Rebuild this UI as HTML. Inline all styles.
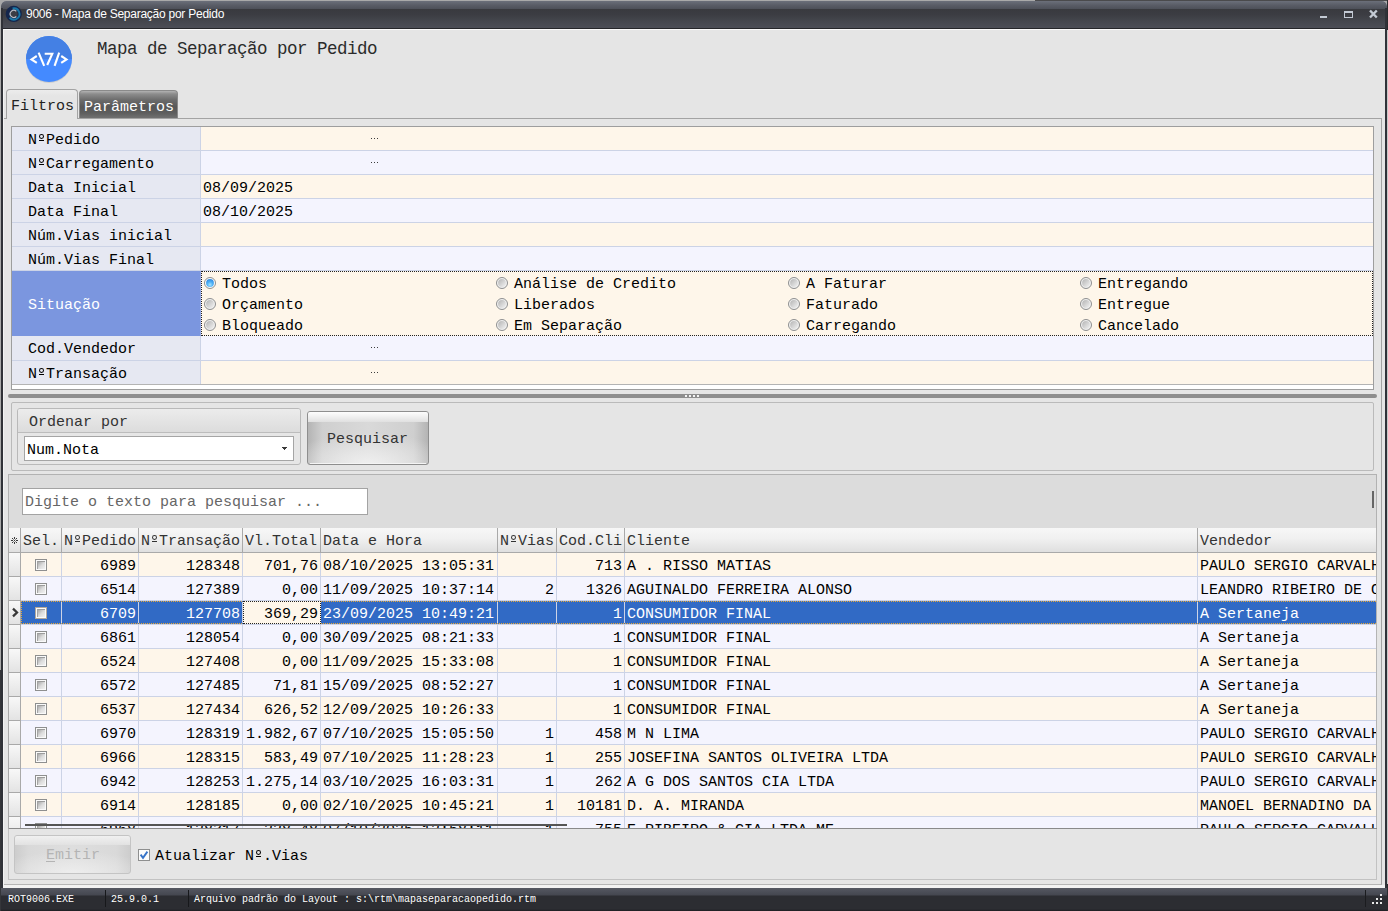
<!DOCTYPE html><html><head><meta charset="utf-8"><title>9006 - Mapa de Separação por Pedido</title><style>
*{box-sizing:border-box;margin:0;padding:0}
html,body{width:1388px;height:911px;overflow:hidden;background:#e5e5e5}
body{font-family:"Liberation Mono",monospace;font-size:15px;color:#000;position:relative}
#root{position:absolute;left:0;top:0;width:1388px;height:911px;overflow:hidden;background:#e5e5e5}
.a{position:absolute}
.t{position:absolute;white-space:pre;line-height:24px;height:24px}
.s{font-family:"Liberation Sans",sans-serif}
.o{display:inline-block;width:9px;height:0;position:relative}
.o i{position:absolute;left:1.8px;bottom:5px;width:5.4px;height:5.2px;border:1.4px solid currentColor;border-radius:50%}
.o b{position:absolute;left:2px;bottom:3px;width:5px;height:1px;background:currentColor}
</style></head><body><div id="root">
<div class="a" style="left:0px;top:0px;width:1388px;height:911px;background:#a9a9a9"></div>
<div class="a" style="left:1035px;top:0px;width:353px;height:1px;background:#4a4a4c"></div>
<div class="a" style="left:1px;top:1px;width:1386px;height:910px;background:#e5e5e5;border-radius:5px 5px 0 0"></div>
<div class="a" style="left:1px;top:1px;width:1386px;height:28px;border-radius:5px 5px 0 0;background:linear-gradient(#6b6f7a 0px,#5a5d67 4px,#4d5059 8px,#393a3f 8.5px,#3c3d43 14px,#44464d 20px,#4c4e57 27px)"></div>
<div class="a" style="left:1px;top:28px;width:1386px;height:1px;background:#25262a"></div>
<div class="a" style="left:3px;top:29px;width:1382px;height:1px;background:#fafafa"></div>
<div class="a" style="left:1px;top:8px;width:2px;height:903px;background:#303238"></div>
<div class="a" style="left:3px;top:30px;width:1px;height:858px;background:#f2f2f2"></div>
<div class="a" style="left:1385px;top:8px;width:2px;height:903px;background:#303238"></div>
<div class="a" style="left:1387px;top:0px;width:1px;height:911px;background:#c8c8c8"></div>
<div class="a" style="left:1387px;top:0px;width:1px;height:30px;background:#2a2b2e"></div>
<div class="a" style="left:1387px;top:884px;width:1px;height:27px;background:#2a2b2e"></div>
<div class="a" style="left:0px;top:670px;width:1px;height:241px;background:#35363a"></div>
<svg class="a" style="left:5px;top:5px" width="18" height="18" viewBox="0 0 18 18"><circle cx="8.8" cy="8.9" r="8.1" fill="#14264c"/><path d="M7.6 3.5A5.6 5.6 0 1 1 4.6 12.6" fill="none" stroke="#1a78a8" stroke-width="1.9"/><circle cx="8.8" cy="8.9" r="3.9" fill="#3b3d45"/><path d="M11.3 6.3A3.6 3.6 0 1 0 11.3 11.5" fill="none" stroke="#b9bdc6" stroke-width="1.2"/></svg>
<div class="t s" style="left:26px;top:3px;color:#fff;font-size:12px;line-height:22px;height:22px;letter-spacing:-0.25px">9006 - Mapa de Separação por Pedido</div>
<div class="a" style="left:1320px;top:16px;width:7px;height:2px;background:#c3cad4"></div>
<div class="a" style="left:1344px;top:11px;width:9px;height:7px;border:1px solid #c3cad4;border-top:2px solid #c3cad4"></div>
<svg class="a" style="left:1368px;top:9px" width="11" height="10" viewBox="1368 9 11 10"><path d="M1370 10.5L1376.8 17.5M1376.8 10.5L1370 17.5" stroke="#c3cad4" stroke-width="2.4"/></svg>
<svg class="a" style="left:22px;top:32px" width="54" height="54" viewBox="22 32 54 54"><defs><clipPath id="ct"><rect x="22" y="32" width="54" height="27"/></clipPath></defs><circle cx="49" cy="60" r="23" fill="#000" opacity="0.10"/><circle cx="49" cy="59" r="23" fill="#448aff"/><circle cx="49" cy="59" r="23" fill="#4480e4" clip-path="url(#ct)"/><g fill="none" stroke="#fff" stroke-width="2.1"><path d="M36.8 56L31.5 59.4L36.8 62.9"/><path d="M38.6 52.7L44.2 65.9"/><path d="M44.7 53.7L52.3 53.7L47.2 65"/><path d="M59.2 52.7L54.6 65.9"/><path d="M61.2 56L66.5 59.4L61.2 62.9"/></g></svg>
<div class="t" style="left:97px;top:37px;font-size:17.5px;letter-spacing:-0.5px;color:#2b2b2b">Mapa de Separação por Pedido</div>
<div class="a" style="left:4px;top:118px;width:1378px;height:767px;border:1px solid #a3a3a3;border-left:none;border-bottom-color:#b5b5b5"></div>
<div class="a" style="left:79px;top:90px;width:99px;height:28px;border:1px solid #8a8a8a;border-bottom:none;border-radius:4px 4px 0 0;background:linear-gradient(#b2b2b2 0,#8c8c8c 3px,#6b6b6b 9px,#575757 16px,#5e5e5e 22px,#757575 28px)"></div>
<div class="t" style="left:84px;top:96px;color:#fff">Parâmetros</div>
<div class="a" style="left:6px;top:89px;width:72px;height:30px;border:1px solid #a3a3a3;border-bottom:none;border-radius:4px 4px 0 0;background:linear-gradient(#ececec,#e5e5e5 6px)"></div>
<div class="t" style="left:11px;top:95px;color:#222">Filtros</div>
<div class="a" style="left:11px;top:126px;width:1363px;height:264px;border:1px solid #9e9e9e;background:#fff"></div>
<div class="a" style="left:12px;top:127px;width:188px;height:23px;background:#e6e8f2"></div>
<div class="a" style="left:12px;top:150px;width:188px;height:1px;background:#ccd3e6"></div>
<div class="a" style="left:200px;top:127px;width:1px;height:24px;background:#ccd3e6"></div>
<div class="a" style="left:201px;top:127px;width:1172px;height:23px;background:#fef6ea"></div>
<div class="a" style="left:201px;top:150px;width:1172px;height:1px;background:#ccd3e6"></div>
<div class="t" style="left:28px;top:129px;">N<span class="o"><i></i><b></b></span>Pedido</div>
<div class="a" style="left:371px;top:138px;width:1px;height:1px;background:#3c3c3c"></div>
<div class="a" style="left:374px;top:138px;width:1px;height:1px;background:#3c3c3c"></div>
<div class="a" style="left:377px;top:138px;width:1px;height:1px;background:#3c3c3c"></div>
<div class="a" style="left:12px;top:151px;width:188px;height:23px;background:#e6e8f2"></div>
<div class="a" style="left:12px;top:174px;width:188px;height:1px;background:#ccd3e6"></div>
<div class="a" style="left:200px;top:151px;width:1px;height:24px;background:#ccd3e6"></div>
<div class="a" style="left:201px;top:151px;width:1172px;height:23px;background:#f4f4fe"></div>
<div class="a" style="left:201px;top:174px;width:1172px;height:1px;background:#ccd3e6"></div>
<div class="t" style="left:28px;top:153px;">N<span class="o"><i></i><b></b></span>Carregamento</div>
<div class="a" style="left:371px;top:162px;width:1px;height:1px;background:#3c3c3c"></div>
<div class="a" style="left:374px;top:162px;width:1px;height:1px;background:#3c3c3c"></div>
<div class="a" style="left:377px;top:162px;width:1px;height:1px;background:#3c3c3c"></div>
<div class="a" style="left:12px;top:175px;width:188px;height:23px;background:#e6e8f2"></div>
<div class="a" style="left:12px;top:198px;width:188px;height:1px;background:#ccd3e6"></div>
<div class="a" style="left:200px;top:175px;width:1px;height:24px;background:#ccd3e6"></div>
<div class="a" style="left:201px;top:175px;width:1172px;height:23px;background:#fef6ea"></div>
<div class="a" style="left:201px;top:198px;width:1172px;height:1px;background:#ccd3e6"></div>
<div class="t" style="left:28px;top:177px;">Data Inicial</div>
<div class="t" style="left:203px;top:177px;">08/09/2025</div>
<div class="a" style="left:12px;top:199px;width:188px;height:23px;background:#e6e8f2"></div>
<div class="a" style="left:12px;top:222px;width:188px;height:1px;background:#ccd3e6"></div>
<div class="a" style="left:200px;top:199px;width:1px;height:24px;background:#ccd3e6"></div>
<div class="a" style="left:201px;top:199px;width:1172px;height:23px;background:#f4f4fe"></div>
<div class="a" style="left:201px;top:222px;width:1172px;height:1px;background:#ccd3e6"></div>
<div class="t" style="left:28px;top:201px;">Data Final</div>
<div class="t" style="left:203px;top:201px;">08/10/2025</div>
<div class="a" style="left:12px;top:223px;width:188px;height:23px;background:#e6e8f2"></div>
<div class="a" style="left:12px;top:246px;width:188px;height:1px;background:#ccd3e6"></div>
<div class="a" style="left:200px;top:223px;width:1px;height:24px;background:#ccd3e6"></div>
<div class="a" style="left:201px;top:223px;width:1172px;height:23px;background:#fef6ea"></div>
<div class="a" style="left:201px;top:246px;width:1172px;height:1px;background:#ccd3e6"></div>
<div class="t" style="left:28px;top:225px;">Núm.Vias inicial</div>
<div class="a" style="left:12px;top:247px;width:188px;height:23px;background:#e6e8f2"></div>
<div class="a" style="left:12px;top:270px;width:188px;height:1px;background:#ccd3e6"></div>
<div class="a" style="left:200px;top:247px;width:1px;height:24px;background:#ccd3e6"></div>
<div class="a" style="left:201px;top:247px;width:1172px;height:23px;background:#f4f4fe"></div>
<div class="a" style="left:201px;top:270px;width:1172px;height:1px;background:#ccd3e6"></div>
<div class="t" style="left:28px;top:249px;">Núm.Vias Final</div>
<div class="a" style="left:12px;top:271px;width:188px;height:65px;background:#7b96df"></div>
<div class="a" style="left:200px;top:271px;width:1px;height:65px;background:#93a8e4"></div>
<div class="t" style="left:28px;top:294px;color:#fff">Situação</div>
<div class="a" style="left:201px;top:271px;width:1172px;height:65px;background:#fef6ea;border:1px dotted #222"></div>
<svg width="0" height="0" style="position:absolute"><defs><linearGradient id="rg" x1="0" y1="0" x2="1" y2="1"><stop offset="0" stop-color="#b4b4b4"/><stop offset="1" stop-color="#f2f2f2"/></linearGradient><radialGradient id="rb" cx="0.5" cy="0.72" r="0.75"><stop offset="0" stop-color="#a4e2ff"/><stop offset="0.5" stop-color="#4aaef5"/><stop offset="1" stop-color="#2f86e0"/></radialGradient></defs></svg>
<svg class="a" style="left:204px;top:277px" width="12" height="12" viewBox="0 0 12 12"><circle cx="6" cy="6" r="5.5" fill="#fafafa" stroke="#8e8f8f"/><circle cx="6" cy="6" r="3.9" fill="url(#rb)"/></svg>
<div class="t" style="left:222px;top:273px;">Todos</div>
<svg class="a" style="left:204px;top:298px" width="12" height="12" viewBox="0 0 12 12"><circle cx="6" cy="6" r="5.5" fill="#f0f0f0" stroke="#8e8f8f"/><circle cx="6" cy="6" r="3.9" fill="url(#rg)"/></svg>
<div class="t" style="left:222px;top:294px;">Orçamento</div>
<svg class="a" style="left:204px;top:319px" width="12" height="12" viewBox="0 0 12 12"><circle cx="6" cy="6" r="5.5" fill="#f0f0f0" stroke="#8e8f8f"/><circle cx="6" cy="6" r="3.9" fill="url(#rg)"/></svg>
<div class="t" style="left:222px;top:315px;">Bloqueado</div>
<svg class="a" style="left:496px;top:277px" width="12" height="12" viewBox="0 0 12 12"><circle cx="6" cy="6" r="5.5" fill="#f0f0f0" stroke="#8e8f8f"/><circle cx="6" cy="6" r="3.9" fill="url(#rg)"/></svg>
<div class="t" style="left:514px;top:273px;">Análise de Credito</div>
<svg class="a" style="left:496px;top:298px" width="12" height="12" viewBox="0 0 12 12"><circle cx="6" cy="6" r="5.5" fill="#f0f0f0" stroke="#8e8f8f"/><circle cx="6" cy="6" r="3.9" fill="url(#rg)"/></svg>
<div class="t" style="left:514px;top:294px;">Liberados</div>
<svg class="a" style="left:496px;top:319px" width="12" height="12" viewBox="0 0 12 12"><circle cx="6" cy="6" r="5.5" fill="#f0f0f0" stroke="#8e8f8f"/><circle cx="6" cy="6" r="3.9" fill="url(#rg)"/></svg>
<div class="t" style="left:514px;top:315px;">Em Separação</div>
<svg class="a" style="left:788px;top:277px" width="12" height="12" viewBox="0 0 12 12"><circle cx="6" cy="6" r="5.5" fill="#f0f0f0" stroke="#8e8f8f"/><circle cx="6" cy="6" r="3.9" fill="url(#rg)"/></svg>
<div class="t" style="left:806px;top:273px;">A Faturar</div>
<svg class="a" style="left:788px;top:298px" width="12" height="12" viewBox="0 0 12 12"><circle cx="6" cy="6" r="5.5" fill="#f0f0f0" stroke="#8e8f8f"/><circle cx="6" cy="6" r="3.9" fill="url(#rg)"/></svg>
<div class="t" style="left:806px;top:294px;">Faturado</div>
<svg class="a" style="left:788px;top:319px" width="12" height="12" viewBox="0 0 12 12"><circle cx="6" cy="6" r="5.5" fill="#f0f0f0" stroke="#8e8f8f"/><circle cx="6" cy="6" r="3.9" fill="url(#rg)"/></svg>
<div class="t" style="left:806px;top:315px;">Carregando</div>
<svg class="a" style="left:1080px;top:277px" width="12" height="12" viewBox="0 0 12 12"><circle cx="6" cy="6" r="5.5" fill="#f0f0f0" stroke="#8e8f8f"/><circle cx="6" cy="6" r="3.9" fill="url(#rg)"/></svg>
<div class="t" style="left:1098px;top:273px;">Entregando</div>
<svg class="a" style="left:1080px;top:298px" width="12" height="12" viewBox="0 0 12 12"><circle cx="6" cy="6" r="5.5" fill="#f0f0f0" stroke="#8e8f8f"/><circle cx="6" cy="6" r="3.9" fill="url(#rg)"/></svg>
<div class="t" style="left:1098px;top:294px;">Entregue</div>
<svg class="a" style="left:1080px;top:319px" width="12" height="12" viewBox="0 0 12 12"><circle cx="6" cy="6" r="5.5" fill="#f0f0f0" stroke="#8e8f8f"/><circle cx="6" cy="6" r="3.9" fill="url(#rg)"/></svg>
<div class="t" style="left:1098px;top:315px;">Cancelado</div>
<div class="a" style="left:12px;top:336px;width:188px;height:24px;background:#e6e8f2"></div>
<div class="a" style="left:12px;top:360px;width:188px;height:1px;background:#ccd3e6"></div>
<div class="a" style="left:200px;top:336px;width:1px;height:25px;background:#ccd3e6"></div>
<div class="a" style="left:201px;top:336px;width:1172px;height:24px;background:#f4f4fe"></div>
<div class="a" style="left:201px;top:360px;width:1172px;height:1px;background:#ccd3e6"></div>
<div class="t" style="left:28px;top:338px;">Cod.Vendedor</div>
<div class="a" style="left:371px;top:347px;width:1px;height:1px;background:#3c3c3c"></div>
<div class="a" style="left:374px;top:347px;width:1px;height:1px;background:#3c3c3c"></div>
<div class="a" style="left:377px;top:347px;width:1px;height:1px;background:#3c3c3c"></div>
<div class="a" style="left:12px;top:361px;width:188px;height:23px;background:#e6e8f2"></div>
<div class="a" style="left:12px;top:384px;width:188px;height:1px;background:#ccd3e6"></div>
<div class="a" style="left:200px;top:361px;width:1px;height:24px;background:#ccd3e6"></div>
<div class="a" style="left:201px;top:361px;width:1172px;height:23px;background:#fef6ea"></div>
<div class="a" style="left:201px;top:384px;width:1172px;height:1px;background:#ccd3e6"></div>
<div class="t" style="left:28px;top:363px;">N<span class="o"><i></i><b></b></span>Transação</div>
<div class="a" style="left:371px;top:372px;width:1px;height:1px;background:#3c3c3c"></div>
<div class="a" style="left:374px;top:372px;width:1px;height:1px;background:#3c3c3c"></div>
<div class="a" style="left:377px;top:372px;width:1px;height:1px;background:#3c3c3c"></div>
<div class="a" style="left:12px;top:384px;width:1361px;height:1px;background:#b4b4b4"></div>
<div class="a" style="left:8px;top:394px;width:1369px;height:4px;background:#8e8e8e;border-radius:2px"></div>
<div class="a" style="left:685px;top:395px;width:2px;height:2px;background:#f4f4f4"></div>
<div class="a" style="left:689px;top:395px;width:2px;height:2px;background:#f4f4f4"></div>
<div class="a" style="left:693px;top:395px;width:2px;height:2px;background:#f4f4f4"></div>
<div class="a" style="left:697px;top:395px;width:2px;height:2px;background:#f4f4f4"></div>
<div class="a" style="left:11px;top:402px;width:1363px;height:69px;border:1px solid #bababa;border-radius:2px"></div>
<div class="a" style="left:17px;top:408px;width:284px;height:57px;border:1px solid #b9b9b9;border-radius:3px;background:#e6e6e6"></div>
<div class="a" style="left:18px;top:409px;width:282px;height:23px;background:linear-gradient(#ececec,#dcdcdc);border-radius:2px 2px 0 0"></div>
<div class="a" style="left:18px;top:432px;width:282px;height:1px;background:#bcbcbc"></div>
<div class="t" style="left:29px;top:411px;color:#333">Ordenar por</div>
<div class="a" style="left:24px;top:436px;width:270px;height:25px;border:1px solid #a5a5a5;background:#fff"></div>
<div class="t" style="left:27px;top:439px;">Num.Nota</div>
<div class="a" style="left:282px;top:447px;width:5px;height:1px;background:#3a3a3a"></div>
<div class="a" style="left:283px;top:448px;width:3px;height:1px;background:#3a3a3a"></div>
<div class="a" style="left:284px;top:449px;width:1px;height:1px;background:#3a3a3a"></div>
<div class="a" style="left:307px;top:411px;width:122px;height:54px;border:1px solid #8e8e8e;border-radius:3px;background:radial-gradient(ellipse 70% 60% at 50% 100%,#efefef 0,rgba(239,239,239,0) 100%),linear-gradient(90deg,#b4b4b4 0,#cfcfcf 12%,#d9d9d9 50%,#cfcfcf 88%,#b4b4b4 100%)"></div>
<div class="a" style="left:308px;top:412px;width:120px;height:10px;border-radius:2px 2px 0 0;background:linear-gradient(#fdfdfd,#e0e0e0)"></div>
<div class="a" style="left:310px;top:463px;width:116px;height:1px;background:#f4f4f4"></div>
<div class="t" style="left:327px;top:428px;color:#333">Pesquisar</div>
<div class="a" style="left:8px;top:474px;width:1369px;height:54px;background:#dcdcdc;border:1px solid #b2b2b2;border-bottom:none"></div>
<div class="a" style="left:22px;top:488px;width:346px;height:27px;border:1px solid #a3a3a3;background:#fff"></div>
<div class="t" style="left:25px;top:491px;color:#666">Digite o texto para pesquisar ...</div>
<div class="a" style="left:1372px;top:491px;width:2px;height:17px;background:#666"></div>
<div class="a" style="left:8px;top:528px;width:1369px;height:301px;background:#fff;border-left:1px solid #a9a9a9"></div>
<div class="a" style="left:9px;top:528px;width:1368px;height:24px;background:linear-gradient(#f7f7f7,#f0f0f0 45%,#dfdfdf)"></div>
<div class="a" style="left:9px;top:552px;width:1368px;height:1px;background:#a9a9a9"></div>
<div class="a" style="left:20px;top:528px;width:1px;height:24px;background:#a9a9a9"></div>
<div class="a" style="left:61px;top:528px;width:1px;height:24px;background:#a9a9a9"></div>
<div class="t" style="left:23px;top:530px;color:#333">Sel.</div>
<div class="a" style="left:138px;top:528px;width:1px;height:24px;background:#a9a9a9"></div>
<div class="t" style="left:64px;top:530px;color:#333">N<span class="o"><i></i><b></b></span>Pedido</div>
<div class="a" style="left:242px;top:528px;width:1px;height:24px;background:#a9a9a9"></div>
<div class="t" style="left:141px;top:530px;color:#333">N<span class="o"><i></i><b></b></span>Transação</div>
<div class="a" style="left:320px;top:528px;width:1px;height:24px;background:#a9a9a9"></div>
<div class="t" style="left:245px;top:530px;color:#333">Vl.Total</div>
<div class="a" style="left:497px;top:528px;width:1px;height:24px;background:#a9a9a9"></div>
<div class="t" style="left:323px;top:530px;color:#333">Data e Hora</div>
<div class="a" style="left:556px;top:528px;width:1px;height:24px;background:#a9a9a9"></div>
<div class="t" style="left:500px;top:530px;color:#333">N<span class="o"><i></i><b></b></span>Vias</div>
<div class="a" style="left:624px;top:528px;width:1px;height:24px;background:#a9a9a9"></div>
<div class="t" style="left:559px;top:530px;color:#333">Cod.Cli</div>
<div class="a" style="left:1197px;top:528px;width:1px;height:24px;background:#a9a9a9"></div>
<div class="t" style="left:627px;top:530px;color:#333">Cliente</div>
<div class="t" style="left:1200px;top:530px;color:#333">Vendedor</div>
<div class="a" style="left:14px;top:537px;width:1px;height:1px;background:#3a3a3a"></div>
<div class="a" style="left:12px;top:538px;width:1px;height:1px;background:#3a3a3a"></div>
<div class="a" style="left:14px;top:538px;width:1px;height:1px;background:#3a3a3a"></div>
<div class="a" style="left:16px;top:538px;width:1px;height:1px;background:#3a3a3a"></div>
<div class="a" style="left:13px;top:539px;width:1px;height:1px;background:#8a8a8a"></div>
<div class="a" style="left:15px;top:539px;width:1px;height:1px;background:#8a8a8a"></div>
<div class="a" style="left:11px;top:540px;width:1px;height:1px;background:#3a3a3a"></div>
<div class="a" style="left:12px;top:540px;width:1px;height:1px;background:#3a3a3a"></div>
<div class="a" style="left:14px;top:540px;width:1px;height:1px;background:#3a3a3a"></div>
<div class="a" style="left:16px;top:540px;width:1px;height:1px;background:#3a3a3a"></div>
<div class="a" style="left:17px;top:540px;width:1px;height:1px;background:#3a3a3a"></div>
<div class="a" style="left:13px;top:541px;width:1px;height:1px;background:#8a8a8a"></div>
<div class="a" style="left:15px;top:541px;width:1px;height:1px;background:#8a8a8a"></div>
<div class="a" style="left:12px;top:542px;width:1px;height:1px;background:#3a3a3a"></div>
<div class="a" style="left:14px;top:542px;width:1px;height:1px;background:#3a3a3a"></div>
<div class="a" style="left:16px;top:542px;width:1px;height:1px;background:#3a3a3a"></div>
<div class="a" style="left:14px;top:543px;width:1px;height:1px;background:#3a3a3a"></div>
<div class="a" style="left:9px;top:553px;width:1368px;height:275px;overflow:hidden">
<div class="a" style="left:12px;top:0px;width:1356px;height:23px;background:#fef6ea"></div>
<div class="a" style="left:12px;top:23px;width:1356px;height:1px;background:#ccd3e6"></div>
<div class="a" style="left:0px;top:0px;width:11px;height:23px;background:linear-gradient(#f8f8f8,#e3e3e3)"></div>
<div class="a" style="left:0px;top:23px;width:11px;height:1px;background:#a9a9a9"></div>
<div class="a" style="left:11px;top:0px;width:1px;height:24px;background:#a9a9a9"></div>
<div class="a" style="left:52px;top:0px;width:1px;height:24px;background:#ccd3e6"></div>
<div class="a" style="left:129px;top:0px;width:1px;height:24px;background:#ccd3e6"></div>
<div class="a" style="left:233px;top:0px;width:1px;height:24px;background:#ccd3e6"></div>
<div class="a" style="left:311px;top:0px;width:1px;height:24px;background:#ccd3e6"></div>
<div class="a" style="left:488px;top:0px;width:1px;height:24px;background:#ccd3e6"></div>
<div class="a" style="left:547px;top:0px;width:1px;height:24px;background:#ccd3e6"></div>
<div class="a" style="left:615px;top:0px;width:1px;height:24px;background:#ccd3e6"></div>
<div class="a" style="left:1188px;top:0px;width:1px;height:24px;background:#ccd3e6"></div>
<div class="a" style="left:26px;top:6px;width:12px;height:12px;border:1px solid #8e8f8f;background:#fafafa"></div>
<div class="a" style="left:28px;top:8px;width:8px;height:8px;background:linear-gradient(135deg,#a9a9a9,#dcdcdc 50%,#f2f2f2);border-top:1px solid #9c9c9c;border-left:1px solid #a4a4a4"></div>
<div class="t" style="right:1241px;top:2px;color:#000">6989</div>
<div class="t" style="right:1137px;top:2px;color:#000">128348</div>
<div class="t" style="right:1059px;top:2px;color:#000">701,76</div>
<div class="t" style="left:314px;top:2px;color:#000">08/10/2025 13:05:31</div>
<div class="t" style="right:823px;top:2px;color:#000"></div>
<div class="t" style="right:755px;top:2px;color:#000">713</div>
<div class="t" style="left:618px;top:2px;color:#000">A . RISSO MATIAS</div>
<div class="t" style="left:1191px;top:2px;color:#000">PAULO SERGIO CARVALHO</div>
<div class="a" style="left:12px;top:24px;width:1356px;height:23px;background:#f4f4fe"></div>
<div class="a" style="left:12px;top:47px;width:1356px;height:1px;background:#ccd3e6"></div>
<div class="a" style="left:0px;top:24px;width:11px;height:23px;background:linear-gradient(#f8f8f8,#e3e3e3)"></div>
<div class="a" style="left:0px;top:47px;width:11px;height:1px;background:#a9a9a9"></div>
<div class="a" style="left:11px;top:24px;width:1px;height:24px;background:#a9a9a9"></div>
<div class="a" style="left:52px;top:24px;width:1px;height:24px;background:#ccd3e6"></div>
<div class="a" style="left:129px;top:24px;width:1px;height:24px;background:#ccd3e6"></div>
<div class="a" style="left:233px;top:24px;width:1px;height:24px;background:#ccd3e6"></div>
<div class="a" style="left:311px;top:24px;width:1px;height:24px;background:#ccd3e6"></div>
<div class="a" style="left:488px;top:24px;width:1px;height:24px;background:#ccd3e6"></div>
<div class="a" style="left:547px;top:24px;width:1px;height:24px;background:#ccd3e6"></div>
<div class="a" style="left:615px;top:24px;width:1px;height:24px;background:#ccd3e6"></div>
<div class="a" style="left:1188px;top:24px;width:1px;height:24px;background:#ccd3e6"></div>
<div class="a" style="left:26px;top:30px;width:12px;height:12px;border:1px solid #8e8f8f;background:#fafafa"></div>
<div class="a" style="left:28px;top:32px;width:8px;height:8px;background:linear-gradient(135deg,#a9a9a9,#dcdcdc 50%,#f2f2f2);border-top:1px solid #9c9c9c;border-left:1px solid #a4a4a4"></div>
<div class="t" style="right:1241px;top:26px;color:#000">6514</div>
<div class="t" style="right:1137px;top:26px;color:#000">127389</div>
<div class="t" style="right:1059px;top:26px;color:#000">0,00</div>
<div class="t" style="left:314px;top:26px;color:#000">11/09/2025 10:37:14</div>
<div class="t" style="right:823px;top:26px;color:#000">2</div>
<div class="t" style="right:755px;top:26px;color:#000">1326</div>
<div class="t" style="left:618px;top:26px;color:#000">AGUINALDO FERREIRA ALONSO</div>
<div class="t" style="left:1191px;top:26px;color:#000">LEANDRO RIBEIRO DE OLIVEIRA</div>
<div class="a" style="left:12px;top:48px;width:1356px;height:23px;background:#316ac5"></div>
<div class="a" style="left:12px;top:71px;width:1356px;height:1px;background:#ccd3e6"></div>
<div class="a" style="left:0px;top:48px;width:11px;height:23px;background:linear-gradient(#f8f8f8,#e3e3e3)"></div>
<div class="a" style="left:0px;top:71px;width:11px;height:1px;background:#a9a9a9"></div>
<div class="a" style="left:11px;top:48px;width:1px;height:24px;background:#a9a9a9"></div>
<div class="a" style="left:52px;top:48px;width:1px;height:24px;background:#ccd3e6"></div>
<div class="a" style="left:129px;top:48px;width:1px;height:24px;background:#ccd3e6"></div>
<div class="a" style="left:233px;top:48px;width:1px;height:24px;background:#ccd3e6"></div>
<div class="a" style="left:311px;top:48px;width:1px;height:24px;background:#ccd3e6"></div>
<div class="a" style="left:488px;top:48px;width:1px;height:24px;background:#ccd3e6"></div>
<div class="a" style="left:547px;top:48px;width:1px;height:24px;background:#ccd3e6"></div>
<div class="a" style="left:615px;top:48px;width:1px;height:24px;background:#ccd3e6"></div>
<div class="a" style="left:1188px;top:48px;width:1px;height:24px;background:#ccd3e6"></div>
<div class="a" style="left:12px;top:48px;width:1356px;height:1px;background:repeating-linear-gradient(90deg,#e8a838 0 1px,#316ac5 1px 2px)"></div>
<div class="a" style="left:12px;top:70px;width:1356px;height:1px;background:repeating-linear-gradient(90deg,#e8a838 0 1px,#316ac5 1px 2px)"></div>
<div class="a" style="left:12px;top:48px;width:1px;height:23px;background:repeating-linear-gradient(180deg,#e8a838 0 1px,#316ac5 1px 2px)"></div>
<div class="a" style="left:234px;top:48px;width:78px;height:23px;background:#fef6ea;border:1px dotted #222"></div>
<svg class="a" style="left:2px;top:54px" width="9" height="12" viewBox="11 607 9 12"><path d="M13 608.6L17 612.5L13 616.4" fill="none" stroke="#383838" stroke-width="2.3"/></svg>
<div class="a" style="left:26px;top:54px;width:12px;height:12px;border:1px solid #b3a99c;background:#fafafa"></div>
<div class="a" style="left:28px;top:56px;width:8px;height:8px;background:linear-gradient(135deg,#a9a9a9,#dcdcdc 50%,#f2f2f2);border-top:1px solid #9c9c9c;border-left:1px solid #a4a4a4"></div>
<div class="t" style="right:1241px;top:50px;color:#fff">6709</div>
<div class="t" style="right:1137px;top:50px;color:#fff">127708</div>
<div class="t" style="right:1059px;top:50px;color:#000">369,29</div>
<div class="t" style="left:314px;top:50px;color:#fff">23/09/2025 10:49:21</div>
<div class="t" style="right:823px;top:50px;color:#fff"></div>
<div class="t" style="right:755px;top:50px;color:#fff">1</div>
<div class="t" style="left:618px;top:50px;color:#fff">CONSUMIDOR FINAL</div>
<div class="t" style="left:1191px;top:50px;color:#fff">A Sertaneja</div>
<div class="a" style="left:12px;top:72px;width:1356px;height:23px;background:#f4f4fe"></div>
<div class="a" style="left:12px;top:95px;width:1356px;height:1px;background:#ccd3e6"></div>
<div class="a" style="left:0px;top:72px;width:11px;height:23px;background:linear-gradient(#f8f8f8,#e3e3e3)"></div>
<div class="a" style="left:0px;top:95px;width:11px;height:1px;background:#a9a9a9"></div>
<div class="a" style="left:11px;top:72px;width:1px;height:24px;background:#a9a9a9"></div>
<div class="a" style="left:52px;top:72px;width:1px;height:24px;background:#ccd3e6"></div>
<div class="a" style="left:129px;top:72px;width:1px;height:24px;background:#ccd3e6"></div>
<div class="a" style="left:233px;top:72px;width:1px;height:24px;background:#ccd3e6"></div>
<div class="a" style="left:311px;top:72px;width:1px;height:24px;background:#ccd3e6"></div>
<div class="a" style="left:488px;top:72px;width:1px;height:24px;background:#ccd3e6"></div>
<div class="a" style="left:547px;top:72px;width:1px;height:24px;background:#ccd3e6"></div>
<div class="a" style="left:615px;top:72px;width:1px;height:24px;background:#ccd3e6"></div>
<div class="a" style="left:1188px;top:72px;width:1px;height:24px;background:#ccd3e6"></div>
<div class="a" style="left:26px;top:78px;width:12px;height:12px;border:1px solid #8e8f8f;background:#fafafa"></div>
<div class="a" style="left:28px;top:80px;width:8px;height:8px;background:linear-gradient(135deg,#a9a9a9,#dcdcdc 50%,#f2f2f2);border-top:1px solid #9c9c9c;border-left:1px solid #a4a4a4"></div>
<div class="t" style="right:1241px;top:74px;color:#000">6861</div>
<div class="t" style="right:1137px;top:74px;color:#000">128054</div>
<div class="t" style="right:1059px;top:74px;color:#000">0,00</div>
<div class="t" style="left:314px;top:74px;color:#000">30/09/2025 08:21:33</div>
<div class="t" style="right:823px;top:74px;color:#000"></div>
<div class="t" style="right:755px;top:74px;color:#000">1</div>
<div class="t" style="left:618px;top:74px;color:#000">CONSUMIDOR FINAL</div>
<div class="t" style="left:1191px;top:74px;color:#000">A Sertaneja</div>
<div class="a" style="left:12px;top:96px;width:1356px;height:23px;background:#fef6ea"></div>
<div class="a" style="left:12px;top:119px;width:1356px;height:1px;background:#ccd3e6"></div>
<div class="a" style="left:0px;top:96px;width:11px;height:23px;background:linear-gradient(#f8f8f8,#e3e3e3)"></div>
<div class="a" style="left:0px;top:119px;width:11px;height:1px;background:#a9a9a9"></div>
<div class="a" style="left:11px;top:96px;width:1px;height:24px;background:#a9a9a9"></div>
<div class="a" style="left:52px;top:96px;width:1px;height:24px;background:#ccd3e6"></div>
<div class="a" style="left:129px;top:96px;width:1px;height:24px;background:#ccd3e6"></div>
<div class="a" style="left:233px;top:96px;width:1px;height:24px;background:#ccd3e6"></div>
<div class="a" style="left:311px;top:96px;width:1px;height:24px;background:#ccd3e6"></div>
<div class="a" style="left:488px;top:96px;width:1px;height:24px;background:#ccd3e6"></div>
<div class="a" style="left:547px;top:96px;width:1px;height:24px;background:#ccd3e6"></div>
<div class="a" style="left:615px;top:96px;width:1px;height:24px;background:#ccd3e6"></div>
<div class="a" style="left:1188px;top:96px;width:1px;height:24px;background:#ccd3e6"></div>
<div class="a" style="left:26px;top:102px;width:12px;height:12px;border:1px solid #8e8f8f;background:#fafafa"></div>
<div class="a" style="left:28px;top:104px;width:8px;height:8px;background:linear-gradient(135deg,#a9a9a9,#dcdcdc 50%,#f2f2f2);border-top:1px solid #9c9c9c;border-left:1px solid #a4a4a4"></div>
<div class="t" style="right:1241px;top:98px;color:#000">6524</div>
<div class="t" style="right:1137px;top:98px;color:#000">127408</div>
<div class="t" style="right:1059px;top:98px;color:#000">0,00</div>
<div class="t" style="left:314px;top:98px;color:#000">11/09/2025 15:33:08</div>
<div class="t" style="right:823px;top:98px;color:#000"></div>
<div class="t" style="right:755px;top:98px;color:#000">1</div>
<div class="t" style="left:618px;top:98px;color:#000">CONSUMIDOR FINAL</div>
<div class="t" style="left:1191px;top:98px;color:#000">A Sertaneja</div>
<div class="a" style="left:12px;top:120px;width:1356px;height:23px;background:#f4f4fe"></div>
<div class="a" style="left:12px;top:143px;width:1356px;height:1px;background:#ccd3e6"></div>
<div class="a" style="left:0px;top:120px;width:11px;height:23px;background:linear-gradient(#f8f8f8,#e3e3e3)"></div>
<div class="a" style="left:0px;top:143px;width:11px;height:1px;background:#a9a9a9"></div>
<div class="a" style="left:11px;top:120px;width:1px;height:24px;background:#a9a9a9"></div>
<div class="a" style="left:52px;top:120px;width:1px;height:24px;background:#ccd3e6"></div>
<div class="a" style="left:129px;top:120px;width:1px;height:24px;background:#ccd3e6"></div>
<div class="a" style="left:233px;top:120px;width:1px;height:24px;background:#ccd3e6"></div>
<div class="a" style="left:311px;top:120px;width:1px;height:24px;background:#ccd3e6"></div>
<div class="a" style="left:488px;top:120px;width:1px;height:24px;background:#ccd3e6"></div>
<div class="a" style="left:547px;top:120px;width:1px;height:24px;background:#ccd3e6"></div>
<div class="a" style="left:615px;top:120px;width:1px;height:24px;background:#ccd3e6"></div>
<div class="a" style="left:1188px;top:120px;width:1px;height:24px;background:#ccd3e6"></div>
<div class="a" style="left:26px;top:126px;width:12px;height:12px;border:1px solid #8e8f8f;background:#fafafa"></div>
<div class="a" style="left:28px;top:128px;width:8px;height:8px;background:linear-gradient(135deg,#a9a9a9,#dcdcdc 50%,#f2f2f2);border-top:1px solid #9c9c9c;border-left:1px solid #a4a4a4"></div>
<div class="t" style="right:1241px;top:122px;color:#000">6572</div>
<div class="t" style="right:1137px;top:122px;color:#000">127485</div>
<div class="t" style="right:1059px;top:122px;color:#000">71,81</div>
<div class="t" style="left:314px;top:122px;color:#000">15/09/2025 08:52:27</div>
<div class="t" style="right:823px;top:122px;color:#000"></div>
<div class="t" style="right:755px;top:122px;color:#000">1</div>
<div class="t" style="left:618px;top:122px;color:#000">CONSUMIDOR FINAL</div>
<div class="t" style="left:1191px;top:122px;color:#000">A Sertaneja</div>
<div class="a" style="left:12px;top:144px;width:1356px;height:23px;background:#fef6ea"></div>
<div class="a" style="left:12px;top:167px;width:1356px;height:1px;background:#ccd3e6"></div>
<div class="a" style="left:0px;top:144px;width:11px;height:23px;background:linear-gradient(#f8f8f8,#e3e3e3)"></div>
<div class="a" style="left:0px;top:167px;width:11px;height:1px;background:#a9a9a9"></div>
<div class="a" style="left:11px;top:144px;width:1px;height:24px;background:#a9a9a9"></div>
<div class="a" style="left:52px;top:144px;width:1px;height:24px;background:#ccd3e6"></div>
<div class="a" style="left:129px;top:144px;width:1px;height:24px;background:#ccd3e6"></div>
<div class="a" style="left:233px;top:144px;width:1px;height:24px;background:#ccd3e6"></div>
<div class="a" style="left:311px;top:144px;width:1px;height:24px;background:#ccd3e6"></div>
<div class="a" style="left:488px;top:144px;width:1px;height:24px;background:#ccd3e6"></div>
<div class="a" style="left:547px;top:144px;width:1px;height:24px;background:#ccd3e6"></div>
<div class="a" style="left:615px;top:144px;width:1px;height:24px;background:#ccd3e6"></div>
<div class="a" style="left:1188px;top:144px;width:1px;height:24px;background:#ccd3e6"></div>
<div class="a" style="left:26px;top:150px;width:12px;height:12px;border:1px solid #8e8f8f;background:#fafafa"></div>
<div class="a" style="left:28px;top:152px;width:8px;height:8px;background:linear-gradient(135deg,#a9a9a9,#dcdcdc 50%,#f2f2f2);border-top:1px solid #9c9c9c;border-left:1px solid #a4a4a4"></div>
<div class="t" style="right:1241px;top:146px;color:#000">6537</div>
<div class="t" style="right:1137px;top:146px;color:#000">127434</div>
<div class="t" style="right:1059px;top:146px;color:#000">626,52</div>
<div class="t" style="left:314px;top:146px;color:#000">12/09/2025 10:26:33</div>
<div class="t" style="right:823px;top:146px;color:#000"></div>
<div class="t" style="right:755px;top:146px;color:#000">1</div>
<div class="t" style="left:618px;top:146px;color:#000">CONSUMIDOR FINAL</div>
<div class="t" style="left:1191px;top:146px;color:#000">A Sertaneja</div>
<div class="a" style="left:12px;top:168px;width:1356px;height:23px;background:#f4f4fe"></div>
<div class="a" style="left:12px;top:191px;width:1356px;height:1px;background:#ccd3e6"></div>
<div class="a" style="left:0px;top:168px;width:11px;height:23px;background:linear-gradient(#f8f8f8,#e3e3e3)"></div>
<div class="a" style="left:0px;top:191px;width:11px;height:1px;background:#a9a9a9"></div>
<div class="a" style="left:11px;top:168px;width:1px;height:24px;background:#a9a9a9"></div>
<div class="a" style="left:52px;top:168px;width:1px;height:24px;background:#ccd3e6"></div>
<div class="a" style="left:129px;top:168px;width:1px;height:24px;background:#ccd3e6"></div>
<div class="a" style="left:233px;top:168px;width:1px;height:24px;background:#ccd3e6"></div>
<div class="a" style="left:311px;top:168px;width:1px;height:24px;background:#ccd3e6"></div>
<div class="a" style="left:488px;top:168px;width:1px;height:24px;background:#ccd3e6"></div>
<div class="a" style="left:547px;top:168px;width:1px;height:24px;background:#ccd3e6"></div>
<div class="a" style="left:615px;top:168px;width:1px;height:24px;background:#ccd3e6"></div>
<div class="a" style="left:1188px;top:168px;width:1px;height:24px;background:#ccd3e6"></div>
<div class="a" style="left:26px;top:174px;width:12px;height:12px;border:1px solid #8e8f8f;background:#fafafa"></div>
<div class="a" style="left:28px;top:176px;width:8px;height:8px;background:linear-gradient(135deg,#a9a9a9,#dcdcdc 50%,#f2f2f2);border-top:1px solid #9c9c9c;border-left:1px solid #a4a4a4"></div>
<div class="t" style="right:1241px;top:170px;color:#000">6970</div>
<div class="t" style="right:1137px;top:170px;color:#000">128319</div>
<div class="t" style="right:1059px;top:170px;color:#000">1.982,67</div>
<div class="t" style="left:314px;top:170px;color:#000">07/10/2025 15:05:50</div>
<div class="t" style="right:823px;top:170px;color:#000">1</div>
<div class="t" style="right:755px;top:170px;color:#000">458</div>
<div class="t" style="left:618px;top:170px;color:#000">M N LIMA</div>
<div class="t" style="left:1191px;top:170px;color:#000">PAULO SERGIO CARVALHO</div>
<div class="a" style="left:12px;top:192px;width:1356px;height:23px;background:#fef6ea"></div>
<div class="a" style="left:12px;top:215px;width:1356px;height:1px;background:#ccd3e6"></div>
<div class="a" style="left:0px;top:192px;width:11px;height:23px;background:linear-gradient(#f8f8f8,#e3e3e3)"></div>
<div class="a" style="left:0px;top:215px;width:11px;height:1px;background:#a9a9a9"></div>
<div class="a" style="left:11px;top:192px;width:1px;height:24px;background:#a9a9a9"></div>
<div class="a" style="left:52px;top:192px;width:1px;height:24px;background:#ccd3e6"></div>
<div class="a" style="left:129px;top:192px;width:1px;height:24px;background:#ccd3e6"></div>
<div class="a" style="left:233px;top:192px;width:1px;height:24px;background:#ccd3e6"></div>
<div class="a" style="left:311px;top:192px;width:1px;height:24px;background:#ccd3e6"></div>
<div class="a" style="left:488px;top:192px;width:1px;height:24px;background:#ccd3e6"></div>
<div class="a" style="left:547px;top:192px;width:1px;height:24px;background:#ccd3e6"></div>
<div class="a" style="left:615px;top:192px;width:1px;height:24px;background:#ccd3e6"></div>
<div class="a" style="left:1188px;top:192px;width:1px;height:24px;background:#ccd3e6"></div>
<div class="a" style="left:26px;top:198px;width:12px;height:12px;border:1px solid #8e8f8f;background:#fafafa"></div>
<div class="a" style="left:28px;top:200px;width:8px;height:8px;background:linear-gradient(135deg,#a9a9a9,#dcdcdc 50%,#f2f2f2);border-top:1px solid #9c9c9c;border-left:1px solid #a4a4a4"></div>
<div class="t" style="right:1241px;top:194px;color:#000">6966</div>
<div class="t" style="right:1137px;top:194px;color:#000">128315</div>
<div class="t" style="right:1059px;top:194px;color:#000">583,49</div>
<div class="t" style="left:314px;top:194px;color:#000">07/10/2025 11:28:23</div>
<div class="t" style="right:823px;top:194px;color:#000">1</div>
<div class="t" style="right:755px;top:194px;color:#000">255</div>
<div class="t" style="left:618px;top:194px;color:#000">JOSEFINA SANTOS OLIVEIRA LTDA</div>
<div class="t" style="left:1191px;top:194px;color:#000">PAULO SERGIO CARVALHO</div>
<div class="a" style="left:12px;top:216px;width:1356px;height:23px;background:#f4f4fe"></div>
<div class="a" style="left:12px;top:239px;width:1356px;height:1px;background:#ccd3e6"></div>
<div class="a" style="left:0px;top:216px;width:11px;height:23px;background:linear-gradient(#f8f8f8,#e3e3e3)"></div>
<div class="a" style="left:0px;top:239px;width:11px;height:1px;background:#a9a9a9"></div>
<div class="a" style="left:11px;top:216px;width:1px;height:24px;background:#a9a9a9"></div>
<div class="a" style="left:52px;top:216px;width:1px;height:24px;background:#ccd3e6"></div>
<div class="a" style="left:129px;top:216px;width:1px;height:24px;background:#ccd3e6"></div>
<div class="a" style="left:233px;top:216px;width:1px;height:24px;background:#ccd3e6"></div>
<div class="a" style="left:311px;top:216px;width:1px;height:24px;background:#ccd3e6"></div>
<div class="a" style="left:488px;top:216px;width:1px;height:24px;background:#ccd3e6"></div>
<div class="a" style="left:547px;top:216px;width:1px;height:24px;background:#ccd3e6"></div>
<div class="a" style="left:615px;top:216px;width:1px;height:24px;background:#ccd3e6"></div>
<div class="a" style="left:1188px;top:216px;width:1px;height:24px;background:#ccd3e6"></div>
<div class="a" style="left:26px;top:222px;width:12px;height:12px;border:1px solid #8e8f8f;background:#fafafa"></div>
<div class="a" style="left:28px;top:224px;width:8px;height:8px;background:linear-gradient(135deg,#a9a9a9,#dcdcdc 50%,#f2f2f2);border-top:1px solid #9c9c9c;border-left:1px solid #a4a4a4"></div>
<div class="t" style="right:1241px;top:218px;color:#000">6942</div>
<div class="t" style="right:1137px;top:218px;color:#000">128253</div>
<div class="t" style="right:1059px;top:218px;color:#000">1.275,14</div>
<div class="t" style="left:314px;top:218px;color:#000">03/10/2025 16:03:31</div>
<div class="t" style="right:823px;top:218px;color:#000">1</div>
<div class="t" style="right:755px;top:218px;color:#000">262</div>
<div class="t" style="left:618px;top:218px;color:#000">A G DOS SANTOS CIA LTDA</div>
<div class="t" style="left:1191px;top:218px;color:#000">PAULO SERGIO CARVALHO</div>
<div class="a" style="left:12px;top:240px;width:1356px;height:23px;background:#fef6ea"></div>
<div class="a" style="left:12px;top:263px;width:1356px;height:1px;background:#ccd3e6"></div>
<div class="a" style="left:0px;top:240px;width:11px;height:23px;background:linear-gradient(#f8f8f8,#e3e3e3)"></div>
<div class="a" style="left:0px;top:263px;width:11px;height:1px;background:#a9a9a9"></div>
<div class="a" style="left:11px;top:240px;width:1px;height:24px;background:#a9a9a9"></div>
<div class="a" style="left:52px;top:240px;width:1px;height:24px;background:#ccd3e6"></div>
<div class="a" style="left:129px;top:240px;width:1px;height:24px;background:#ccd3e6"></div>
<div class="a" style="left:233px;top:240px;width:1px;height:24px;background:#ccd3e6"></div>
<div class="a" style="left:311px;top:240px;width:1px;height:24px;background:#ccd3e6"></div>
<div class="a" style="left:488px;top:240px;width:1px;height:24px;background:#ccd3e6"></div>
<div class="a" style="left:547px;top:240px;width:1px;height:24px;background:#ccd3e6"></div>
<div class="a" style="left:615px;top:240px;width:1px;height:24px;background:#ccd3e6"></div>
<div class="a" style="left:1188px;top:240px;width:1px;height:24px;background:#ccd3e6"></div>
<div class="a" style="left:26px;top:246px;width:12px;height:12px;border:1px solid #8e8f8f;background:#fafafa"></div>
<div class="a" style="left:28px;top:248px;width:8px;height:8px;background:linear-gradient(135deg,#a9a9a9,#dcdcdc 50%,#f2f2f2);border-top:1px solid #9c9c9c;border-left:1px solid #a4a4a4"></div>
<div class="t" style="right:1241px;top:242px;color:#000">6914</div>
<div class="t" style="right:1137px;top:242px;color:#000">128185</div>
<div class="t" style="right:1059px;top:242px;color:#000">0,00</div>
<div class="t" style="left:314px;top:242px;color:#000">02/10/2025 10:45:21</div>
<div class="t" style="right:823px;top:242px;color:#000">1</div>
<div class="t" style="right:755px;top:242px;color:#000">10181</div>
<div class="t" style="left:618px;top:242px;color:#000">D. A. MIRANDA</div>
<div class="t" style="left:1191px;top:242px;color:#000">MANOEL BERNADINO DA SILVA</div>
<div class="a" style="left:12px;top:264px;width:1356px;height:23px;background:#f4f4fe"></div>
<div class="a" style="left:12px;top:287px;width:1356px;height:1px;background:#ccd3e6"></div>
<div class="a" style="left:0px;top:264px;width:11px;height:23px;background:linear-gradient(#f8f8f8,#e3e3e3)"></div>
<div class="a" style="left:0px;top:287px;width:11px;height:1px;background:#a9a9a9"></div>
<div class="a" style="left:11px;top:264px;width:1px;height:24px;background:#a9a9a9"></div>
<div class="a" style="left:52px;top:264px;width:1px;height:24px;background:#ccd3e6"></div>
<div class="a" style="left:129px;top:264px;width:1px;height:24px;background:#ccd3e6"></div>
<div class="a" style="left:233px;top:264px;width:1px;height:24px;background:#ccd3e6"></div>
<div class="a" style="left:311px;top:264px;width:1px;height:24px;background:#ccd3e6"></div>
<div class="a" style="left:488px;top:264px;width:1px;height:24px;background:#ccd3e6"></div>
<div class="a" style="left:547px;top:264px;width:1px;height:24px;background:#ccd3e6"></div>
<div class="a" style="left:615px;top:264px;width:1px;height:24px;background:#ccd3e6"></div>
<div class="a" style="left:1188px;top:264px;width:1px;height:24px;background:#ccd3e6"></div>
<div class="a" style="left:26px;top:270px;width:12px;height:12px;border:1px solid #8e8f8f;background:#fafafa"></div>
<div class="a" style="left:28px;top:272px;width:8px;height:8px;background:linear-gradient(135deg,#a9a9a9,#dcdcdc 50%,#f2f2f2);border-top:1px solid #9c9c9c;border-left:1px solid #a4a4a4"></div>
<div class="t" style="right:1241px;top:266px;color:#000">6968</div>
<div class="t" style="right:1137px;top:266px;color:#000">128317</div>
<div class="t" style="right:1059px;top:266px;color:#000">228,48</div>
<div class="t" style="left:314px;top:266px;color:#000">07/10/2025 12:58:11</div>
<div class="t" style="right:823px;top:266px;color:#000">1</div>
<div class="t" style="right:755px;top:266px;color:#000">755</div>
<div class="t" style="left:618px;top:266px;color:#000">E RIBEIRO &amp; CIA LTDA ME</div>
<div class="t" style="left:1191px;top:266px;color:#000">PAULO SERGIO CARVALHO</div>
<div class="a" style="left:16px;top:271px;width:542px;height:2px;background:#555"></div>
</div>
<div class="a" style="left:1376px;top:528px;width:1px;height:300px;background:#b4b4b4"></div>
<div class="a" style="left:9px;top:828px;width:1368px;height:1px;background:#8a8a8a"></div>
<div class="a" style="left:8px;top:829px;width:1369px;height:51px;border:1px solid #c2c2c2;border-top:none"></div>
<div class="a" style="left:14px;top:835px;width:117px;height:39px;border:1px solid #c4c4c4;border-radius:3px;background:radial-gradient(ellipse 70% 60% at 50% 100%,#ededed 0,rgba(237,237,237,0) 100%),linear-gradient(90deg,#cdcdcd 0,#d9d9d9 12%,#dedede 50%,#d9d9d9 88%,#cdcdcd 100%)"></div>
<div class="a" style="left:15px;top:836px;width:115px;height:9px;border-radius:2px 2px 0 0;background:linear-gradient(#f0f0f0,#e2e2e2)"></div>
<div class="t" style="left:46px;top:844px;color:#b4b4b4">Emitir</div>
<div class="a" style="left:46px;top:861px;width:9px;height:1px;background:#b4b4b4"></div>
<div class="a" style="left:138px;top:849px;width:12px;height:12px;border:1px solid #8e8f8f;background:#fbfbfb"></div>
<svg class="a" style="left:139px;top:850px" width="10" height="10" viewBox="0 0 10 10"><path d="M1.6 4.6L4 7.8L8.4 1.6" fill="none" stroke="#3673c8" stroke-width="1.9"/></svg>
<div class="t" style="left:155px;top:845px;">Atualizar N<span class="o"><i></i><b></b></span>.Vias</div>
<div class="a" style="left:3px;top:885px;width:1382px;height:3px;background:#f2f2f2"></div>
<div class="a" style="left:1px;top:888px;width:1386px;height:23px;background:linear-gradient(#555862 0,#454750 7px,#2c2d32 8px,#2c2d32 21px,#1d1e21 23px)"></div>
<div class="t" style="left:8px;top:890px;font-size:10px;color:#fff;line-height:20px;height:20px">ROT9006.EXE</div>
<div class="t" style="left:111px;top:890px;font-size:10px;color:#fff;line-height:20px;height:20px">25.9.0.1</div>
<div class="t" style="left:194px;top:890px;font-size:10px;color:#fff;line-height:20px;height:20px">Arquivo padrão do Layout : s:\rtm\mapaseparacaopedido.rtm</div>
<div class="a" style="left:105px;top:890px;width:1px;height:17px;background:#17181b"></div>
<div class="a" style="left:188px;top:890px;width:1px;height:17px;background:#17181b"></div>
<div class="a" style="left:1365px;top:890px;width:1px;height:17px;background:#1b1c1f"></div>
<div class="a" style="left:1380px;top:894px;width:2px;height:2px;background:#e8e8e8"></div>
<div class="a" style="left:1376px;top:898px;width:2px;height:2px;background:#e8e8e8"></div>
<div class="a" style="left:1380px;top:898px;width:2px;height:2px;background:#e8e8e8"></div>
<div class="a" style="left:1372px;top:902px;width:2px;height:2px;background:#e8e8e8"></div>
<div class="a" style="left:1376px;top:902px;width:2px;height:2px;background:#e8e8e8"></div>
<div class="a" style="left:1380px;top:902px;width:2px;height:2px;background:#e8e8e8"></div>
</div></body></html>
